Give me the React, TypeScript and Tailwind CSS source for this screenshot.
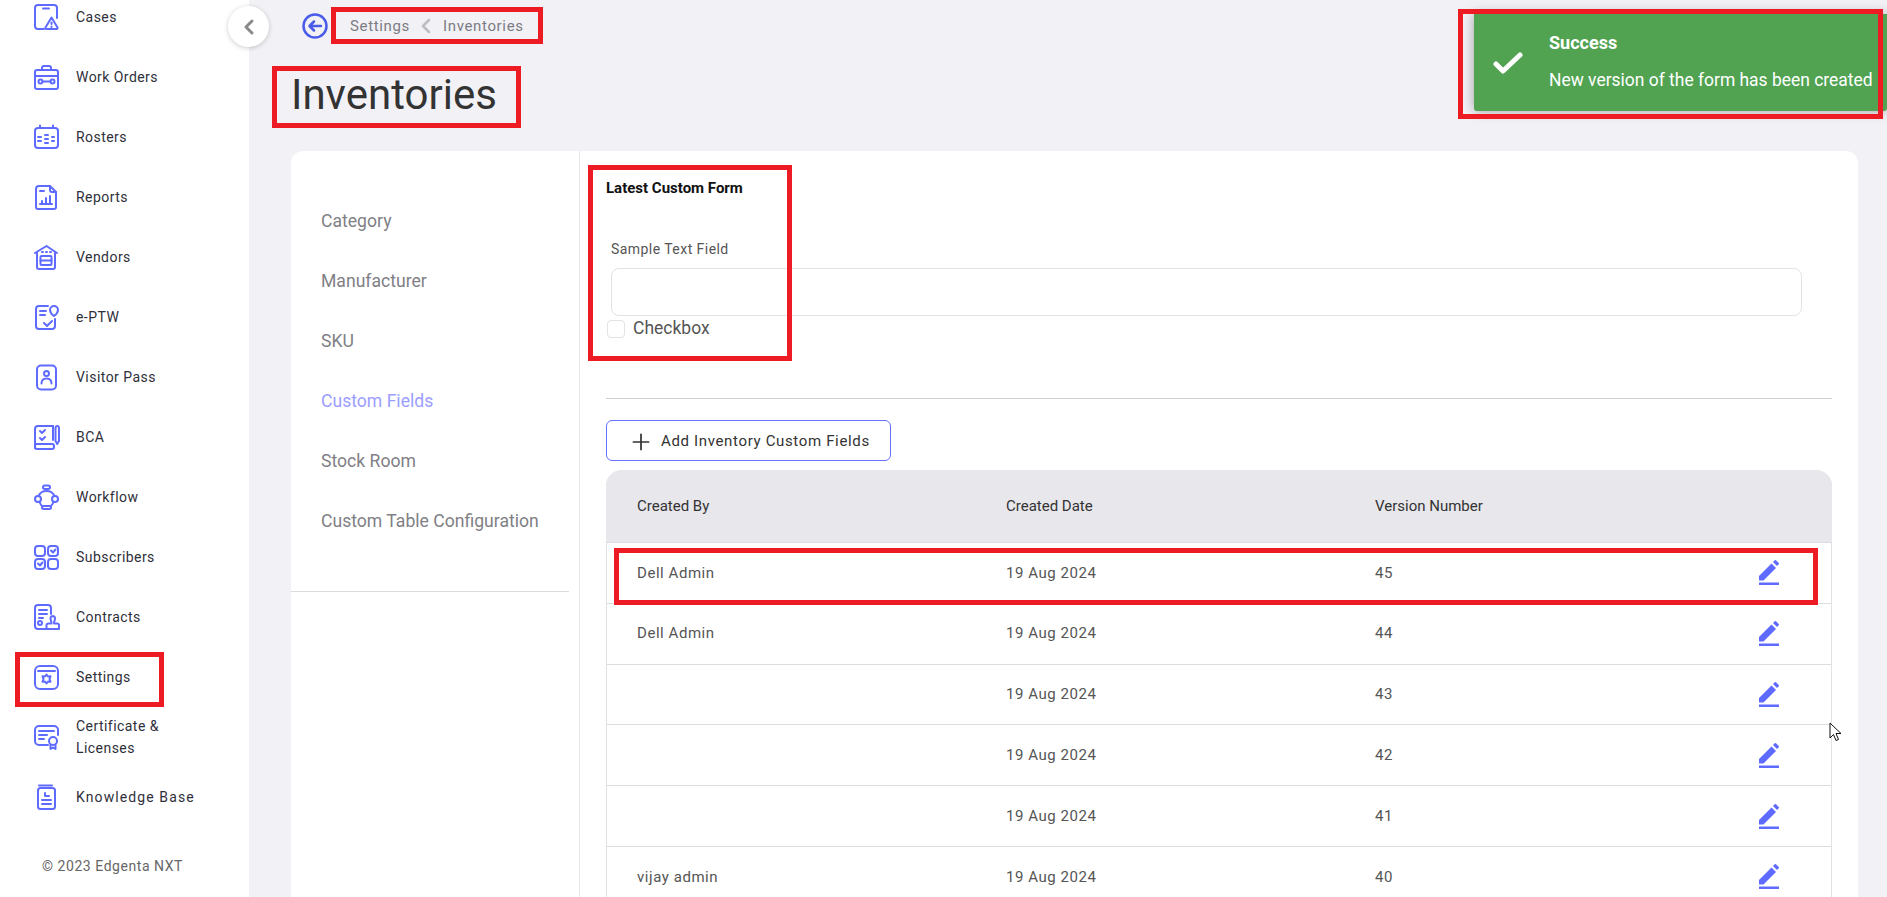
import type { ReactNode } from "react";
import { ChevronLeft, Plus } from "lucide-react";

const navItems: { label: ReactNode; icon: ReactNode; wide?: boolean }[] = [
  {
    label: "Cases",
    icon: (
      <>
        <path d="M11 25H5a3 3 0 0 1-3-3V4a3 3 0 0 1 3-3h16a3 3 0 0 1 3 3v10" />
        <path d="M10 4.500h6" />
        <path d="M18.500 13.500l6 10a1 1 0 0 1-.9 1.500H13.400a1 1 0 0 1-.9-1.500z" />
        <path d="M18.500 18.500v1.500M18.500 22.600v.4" />
      </>
    ),
  },
  {
    label: "Work Orders",
    icon: (
      <>
        <rect x="2" y="6" width="23" height="19" rx="2" />
        <path d="M9 6V4a2 2 0 0 1 2-2h5a2 2 0 0 1 2 2v2" />
        <path d="M2 12h23" />
        <circle cx="7.500" cy="17.500" r="2" />
        <circle cx="19.500" cy="17.500" r="2" />
        <path d="M9.500 17.500h8" />
      </>
    ),
  },
  {
    label: "Rosters",
    icon: (
      <>
        <rect x="2" y="4" width="23" height="20" rx="3" />
        <path d="M7 1.500V4M20 1.500V4" />
        <path d="M5 13h3M12 11h3M19 13h2M5 17h3M12 15h3M19 17h2M12 19h3" />
      </>
    ),
  },
  {
    label: "Reports",
    icon: (
      <>
        <path d="M17 2H6a3 3 0 0 0-3 3v18a2 2 0 0 0 2 2h16a2 2 0 0 0 2-2V8z" />
        <path d="M17 2v4a2 2 0 0 0 2 2h4" />
        <path d="M7 7h4" />
        <path d="M7 20h12M9 20v-3M13 20v-6M17 20v-8" />
      </>
    ),
  },
  {
    label: "Vendors",
    icon: (
      <>
        <path d="M2 9l11.500-7L24 9" />
        <path d="M4 9v14a2 2 0 0 0 2 2h14a2 2 0 0 0 2-2V9" />
        <rect x="7.500" y="12" width="11" height="9" rx="1" />
        <path d="M7.500 16.500h11M9 8h1M13 8h1M17 8h1" />
      </>
    ),
  },
  {
    label: "e-PTW",
    icon: (
      <>
        <path d="M15 2H6a3 3 0 0 0-3 3v17a3 3 0 0 0 3 3h13a3 3 0 0 0 3-3v-7" />
        <path d="M7 7h6M7 11h5" />
        <path d="M21 2a4 4 0 0 1 4 4c0 3-4 6-4 6s-4-3-4-6a4 4 0 0 1 4-4z" />
        <path d="M11 19l3 3 5-5" />
      </>
    ),
  },
  {
    label: "Visitor Pass",
    icon: (
      <>
        <rect x="4" y="1.500" width="19" height="24" rx="4" />
        <circle cx="13.500" cy="9.500" r="2.500" />
        <path d="M8.500 19.500c0-3 2-5 5-5s5 2 5 5" />
      </>
    ),
  },
  {
    label: "BCA",
    icon: (
      <>
        <path d="M20 2H5a3 3 0 0 0-3 3v19" />
        <path d="M20 2v14" />
        <path d="M7 7l2 2 3-3M7 14l2 2 3-3" />
        <rect x="2" y="20" width="19" height="5" rx="2" />
        <path d="M22.500 3.500a1.800 1.800 0 0 1 3.500 0V17l-1.800 3-1.700-3z" />
      </>
    ),
  },
  {
    label: "Workflow",
    icon: (
      <>
        <rect x="10" y="1.500" width="7" height="3.500" rx="1.700" />
        <circle cx="5" cy="15" r="3" />
        <circle cx="22" cy="15" r="3" />
        <rect x="9" y="22" width="9" height="3" rx="1.500" />
        <path d="M5.500 12C7 8.500 10 7 13.500 7S20 8.500 21.500 12M13.500 5v2M6.500 18c.8 2 1.500 3.500 3 4.500M20.500 18c-.8 2-1.500 3.500-3 4.500" />
      </>
    ),
  },
  {
    label: "Subscribers",
    icon: (
      <>
        <rect x="2" y="2" width="10" height="10" rx="3" />
        <rect x="15" y="2" width="10" height="10" rx="3" />
        <rect x="2" y="15" width="10" height="10" rx="3" />
        <rect x="15" y="15" width="10" height="10" rx="3" />
        <path d="M18 6.500l2 2 2.500-3M5 19.500l2 2 2.500-3" />
      </>
    ),
  },
  {
    label: "Contracts",
    icon: (
      <>
        <path d="M13 25H5a3 3 0 0 1-3-3V4a3 3 0 0 1 3-3h10a3 3 0 0 1 3 3v6" />
        <path d="M6 6h8M6 10h8M6 14h4" />
        <circle cx="7" cy="19" r="2" />
        <path d="M20 12a2.500 2.500 0 0 0-2.500 2.500c0 2 1 2.500 1 5h-3a2 2 0 0 0-2 2.500V25h12.500v-3a2 2 0 0 0-2-2.500h-3c0-2.500 1-3 1-5A2.500 2.500 0 0 0 20 12z" />
      </>
    ),
  },
  {
    label: "Settings",
    icon: (
      <>
        <rect x="2" y="2" width="23" height="23" rx="5" />
        <path d="M5 7h17" />
        <path d="M13.500 10.500l1.500 2 2.500-.2-1 2.700 1 2.700-2.500-.2-1.500 2-1.500-2-2.500.2 1-2.700-1-2.700 2.500.2z" />
      </>
    ),
  },
  {
    label: (
      <>
        Certificate &amp;
        <br />
        Licenses
      </>
    ),
    icon: (
      <>
        <path d="M15 21H6a4 4 0 0 1-4-4V6a4 4 0 0 1 4-4h15a4 4 0 0 1 4 4v5" />
        <path d="M6 7h15M6 11h8M6 15h5" />
        <circle cx="20" cy="17" r="4" />
        <path d="M17.500 21v4l2.500-1.500 2.500 1.500v-4" />
      </>
    ),
  },
  {
    label: "Knowledge Base",
    wide: true,
    icon: (
      <>
        <path d="M6 1.500h13" />
        <rect x="5" y="4" width="17" height="21" rx="2.500" />
        <path d="M12 9v3h4M9 16h9M9 20h9" />
      </>
    ),
  },
];

const subNav = [
  "Category",
  "Manufacturer",
  "SKU",
  "Custom Fields",
  "Stock Room",
  "Custom Table Configuration",
];

const rows = [
  ["Dell Admin", "45"],
  ["Dell Admin", "44"],
  ["", "43"],
  ["", "42"],
  ["", "41"],
  ["vijay admin", "40"],
];

function EditIcon() {
  return (
    <svg viewBox="0 0 20 25" className="h-[25px] w-[20px] fill-[#5f6bff]">
      <path d="M0 20.500v-4.500L12.500 3.500l4.500 4.500L4.500 20.500z" />
      <path d="M14 2l1.700-1.700a1 1 0 0 1 1.300 0l2.700 2.700a1 1 0 0 1 0 1.300L18 6z" />
      <rect x="0" y="22.500" width="20" height="2.500" />
    </svg>
  );
}

export default function App() {
  return (
    <div className="relative flex h-[897px] w-[1887px] overflow-hidden bg-[#f1f1f6] font-['Roboto',sans-serif] text-[14px] text-[#333]">
      {/* Sidebar */}
      <aside className="flex w-[249px] shrink-0 flex-col overflow-hidden bg-white">
        <nav className="-mt-[13px] shrink-0">
          {navItems.map((item, i) => (
            <div key={i} className="flex h-[60px] items-center gap-[16px] pl-[33px]">
              <svg
                viewBox="0 0 27 27"
                className="h-[27px] w-[27px] shrink-0 fill-none stroke-[#5f6bff] stroke-2"
                strokeLinecap="round"
                strokeLinejoin="round"
              >
                {item.icon}
              </svg>
              <span className={`leading-[22px] text-[#2f2f3a] ${item.wide ? "tracking-[1.1px]" : "tracking-[0.45px]"}`}>{item.label}</span>
            </div>
          ))}
        </nav>
        <p className="mt-[29px] pl-[42px] tracking-[0.55px] text-[#666]">© 2023 Edgenta NXT</p>
      </aside>

      {/* Main */}
      <main className="flex min-w-0 flex-1 flex-col">
        <div className="flex h-[51px] shrink-0 items-center gap-[23px] pl-[53px] pt-[1px]">
          <svg viewBox="0 0 26 26" className="h-[26px] w-[26px] fill-none stroke-[#4a5ce8] stroke-[2.5]" strokeLinecap="round" strokeLinejoin="round">
            <circle cx="13" cy="13" r="11.500" />
            <path d="M19 13H8M12 8.500L7.500 13l4.500 4.500" />
          </svg>
          <div className="-ml-px flex items-center text-[15px] tracking-[0.65px] text-[#7c7c84]">
            <span>Settings</span>
            <ChevronLeft className="mx-[4.5px] h-[24px] w-[24px] text-[#bdbdc2]" strokeWidth={2.5} />
            <span>Inventories</span>
          </div>
        </div>
        <h1 className="ml-[42px] mt-[19px] h-[50px] shrink-0 text-[42px] leading-[50px] text-[#333]">Inventories</h1>

        {/* Card */}
        <div className="ml-[42px] mt-[31px] flex h-[760px] w-[1567px] shrink-0 rounded-[12px] bg-white">
          <div className="w-[289px] shrink-0 border-r border-[#e5e5ea]">
            <div className="w-[278px] border-b border-[#dcdce0] pb-[40px] pt-[40px]">
              {subNav.map((label) => (
                <div
                  key={label}
                  className={`flex h-[60px] items-center pl-[30px] text-[17.6px] ${label === "Custom Fields" ? "text-[#9b9eff]" : "text-[#808085]"}`}
                >
                  {label}
                </div>
              ))}
            </div>
          </div>

          <div className="min-w-0 flex-1 pl-[26px] pr-[26px]">
            <h2 className="mt-[28px] text-[15px] font-bold leading-[18px] text-[#111]">Latest Custom Form</h2>
            <label className="ml-[5px] mt-[42px] block leading-[20px] tracking-[0.45px] text-[#555]">Sample Text Field</label>
            <div className="ml-[5px] mt-[9px] h-[48px] w-[1191px] rounded-[8px] border border-[#e2e2e7]" />
            <div className="mt-[3px] flex h-[19px] items-center gap-[8px] pl-[1px]">
              <span className="h-[18px] w-[18px] rounded-[4px] border border-[#e2e2e7]" />
              <span className="text-[17.5px] text-[#555]">Checkbox</span>
            </div>
            <div className="mt-[60px] h-px bg-[#cfcfd3]" />
            <button className="mt-[21px] flex h-[41px] w-[285px] items-center gap-[7px] rounded-[6px] border border-[#6271ff] pl-[21px] pt-[2px] text-[15px] tracking-[0.65px] text-[#333]">
              <Plus className="h-[26px] w-[26px]" strokeWidth={1.6} />
              Add Inventory Custom Fields
            </button>

            {/* Versions table */}
            <div className="mt-[9px] rounded-t-[16px] border-x border-[#e2e2e6]">
              <div className="-mx-px grid h-[73px] grid-cols-[369px_369px_1fr] items-center rounded-t-[16px] border-b border-[#dddde1] bg-[#e7e7ec] pl-[31px] text-[15px] text-[#333]">
                <span>Created By</span>
                <span>Created Date</span>
                <span>Version Number</span>
              </div>
              {rows.map(([by, version]) => (
                <div key={version} className="grid h-[60.8px] grid-cols-[369px_369px_384px_1fr] items-center border-b border-[#dddde1] pl-[30px] text-[15px] tracking-[0.55px] text-[#555]">
                  <span>{by}</span>
                  <span>19 Aug 2024</span>
                  <span>{version}</span>
                  <EditIcon />
                </div>
              ))}
            </div>
          </div>
        </div>
      </main>

      {/* Collapse button */}
      <button className="absolute left-[228px] top-[6px] flex h-[41px] w-[41px] items-center justify-center rounded-full bg-white shadow-[0_1px_5px_rgba(0,0,0,0.2)]">
        <ChevronLeft className="h-[24px] w-[24px] text-[#8a8a8a]" strokeWidth={3} />
      </button>

      {/* Toast */}
      <div className="absolute left-[1474px] top-[14px] flex h-[97px] w-[413px] items-center rounded-b-[3px] bg-[#51a351] text-white shadow-[0_0_12px_rgba(80,80,80,0.5)]">
        <svg viewBox="0 0 30 24" className="ml-[19px] h-[24px] w-[30px] fill-none stroke-white stroke-[5]" strokeLinecap="round" strokeLinejoin="round">
          <path d="M3 13l7 7L27 4" />
        </svg>
        <div className="ml-[26px] -mt-[3px]">
          <p className="text-[18px] font-bold leading-[22px]">Success</p>
          <p className="mt-[15px] whitespace-nowrap text-[17.45px] leading-[22px]">New version of the form has been created</p>
        </div>
      </div>

      {/* Red annotation boxes */}
      <div className="absolute left-[15px] top-[652px] h-[55px] w-[149px] border-[5px] border-[#ed1c24]" />
      <div className="absolute left-[331px] top-[7px] h-[37px] w-[212px] border-[5px] border-[#ed1c24]" />
      <div className="absolute left-[272px] top-[66px] h-[62px] w-[249px] border-[5px] border-[#ed1c24]" />
      <div className="absolute left-[1458px] top-[9px] h-[110px] w-[425px] border-[5px] border-[#ed1c24]" />
      <div className="absolute left-[588px] top-[165px] h-[196px] w-[204px] border-[5px] border-[#ed1c24]" />
      <div className="absolute left-[614px] top-[548px] h-[57px] w-[1204px] border-[5px] border-[#ed1c24]" />

      {/* Mouse cursor */}
      <svg viewBox="0 0 13 20" className="absolute left-[1829px] top-[722px] h-[20px] w-[13px] fill-white stroke-[#111] stroke-1">
        <path d="M1 1v15l3.500-3.500 2.500 6 2.500-1-2.500-6h5z" />
      </svg>
    </div>
  );
}
